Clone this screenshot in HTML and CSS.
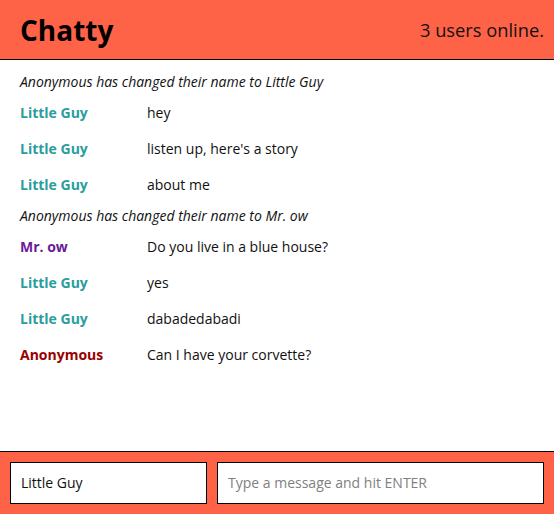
FILE: index.html
```html
<!DOCTYPE html>
<html>
<head>
<meta charset="utf-8">
<link rel="stylesheet" href="styles.css">
</head>
<body>
<div class="app">
  <nav class="navbar">
    <span class="brand">Chatty</span>
    <span class="count">3 users online.</span>
  </nav>
  <main class="messages">
    <div class="system">Anonymous has changed their name to Little Guy</div>
    <div class="message"><span class="user teal">Little Guy</span><span class="content">hey</span></div>
    <div class="message"><span class="user teal">Little Guy</span><span class="content">listen up, here's a story</span></div>
    <div class="message"><span class="user teal">Little Guy</span><span class="content">about me</span></div>
    <div class="system">Anonymous has changed their name to Mr. ow</div>
    <div class="message"><span class="user purple">Mr. ow</span><span class="content">Do you live in a blue house?</span></div>
    <div class="message"><span class="user teal">Little Guy</span><span class="content">yes</span></div>
    <div class="message"><span class="user teal">Little Guy</span><span class="content">dabadedabadi</span></div>
    <div class="message"><span class="user red">Anonymous</span><span class="content">Can I have your corvette?</span></div>
  </main>
  <footer class="chatbar">
    <input class="field" type="text" value="Little Guy">
    <input class="field" type="text" placeholder="Type a message and hit ENTER">
  </footer>
</div>
</body>
</html>
```

FILE: styles.css
```css
* { box-sizing: border-box; }
html, body { margin: 0; padding: 0; height: 100%; }
body {
  font-family: "Open Sans", "Liberation Sans", sans-serif;
  color: #111;
  background: #fff;
}
.app {
  display: flex;
  flex-direction: column;
  height: 514px;
}
.navbar {
  height: 60px;
  background: #ff6347;
  border-bottom: 1px solid #000;
  display: flex;
  align-items: center;
  justify-content: space-between;
  padding: 0 10px 0 20px;
}
.brand {
  font-size: 28px;
  font-weight: 700;
  color: #000;
}
.count {
  font-size: 18.3px;
  color: #111;
}
.messages {
  flex: 1;
  padding: 9px 0 0;
}
.system {
  font-style: italic;
  font-size: 14px;
  line-height: 19px;
  padding: 3px 20px 4px;
}
.message {
  display: flex;
  font-size: 14px;
  line-height: 20px;
  padding: 8px 20px;
}
.user {
  flex: 0 0 127px;
  font-weight: 700;
}
.teal { color: #2a9d9d; }
.purple { color: #6a1b9a; }
.red { color: #990000; }
.chatbar {
  background: #ff6347;
  border-top: 1px solid #000;
  padding: 10px;
  display: grid;
  grid-template-columns: 197px 1fr;
  gap: 10px;
}
.field {
  height: 42px;
  border: 1px solid #000;
  font-family: "Open Sans", "Liberation Sans", sans-serif;
  font-size: 14px;
  padding: 0 10px 2px;
  color: #111;
  background: #fff;
  outline: none;
}
.field::placeholder { color: #808080; }
```
